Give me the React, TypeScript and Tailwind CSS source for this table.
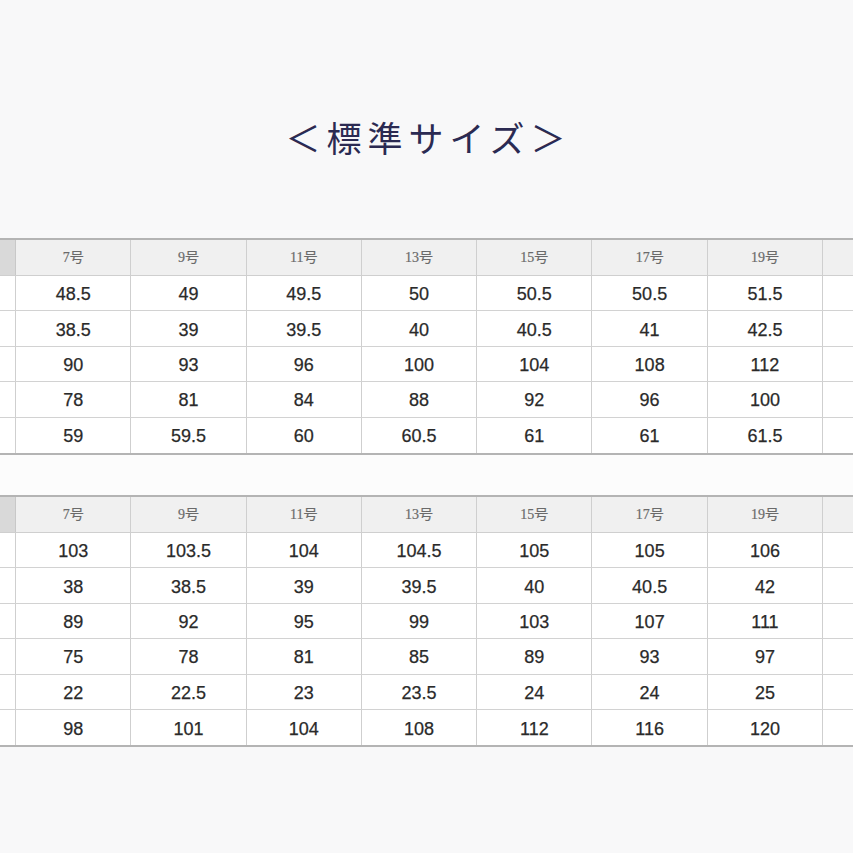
import React from "react";

const headers = ["7号", "9号", "11号", "13号", "15号", "17号", "19号"];

const table1 = [
  ["48.5", "49", "49.5", "50", "50.5", "50.5", "51.5"],
  ["38.5", "39", "39.5", "40", "40.5", "41", "42.5"],
  ["90", "93", "96", "100", "104", "108", "112"],
  ["78", "81", "84", "88", "92", "96", "100"],
  ["59", "59.5", "60", "60.5", "61", "61", "61.5"],
];

const table2 = [
  ["103", "103.5", "104", "104.5", "105", "105", "106"],
  ["38", "38.5", "39", "39.5", "40", "40.5", "42"],
  ["89", "92", "95", "99", "103", "107", "111"],
  ["75", "78", "81", "85", "89", "93", "97"],
  ["22", "22.5", "23", "23.5", "24", "24", "25"],
  ["98", "101", "104", "108", "112", "116", "120"],
];

function SizeTable({ rows }: { rows: string[][] }) {
  return (
    <div className="w-[900px] border-t-2 border-b-2 border-[#b4b4b4]">
      <div className="flex h-[36px] bg-[#f0f0f0] border-b border-[#cfcfcf]">
        <div className="w-[16px] shrink-0 bg-[#d9d9d9] border-r border-[#c8c8c8]" />
        {headers.map((h) => (
          <div
            key={h}
            className="w-[115.3px] shrink-0 border-r border-[#cfcfcf] flex items-center justify-center text-[14px] text-[#6a6a6a] [-webkit-text-stroke:0.2px_#6a6a6a]"
            style={{ fontFamily: '"Liberation Serif", "Noto Sans CJK JP", serif' }}
          >
            {h}
          </div>
        ))}
        <div className="flex-1" />
      </div>
      {rows.map((r, i) => (
        <div
          key={i}
          className={`flex h-[35.4px] bg-white ${i < rows.length - 1 ? "border-b border-[#d2d2d2]" : ""}`}
        >
          <div className="w-[16px] shrink-0 border-r border-[#cfcfcf]" />
          {r.map((v, j) => (
            <div
              key={j}
              className="w-[115.3px] shrink-0 border-r border-[#cfcfcf] flex items-center justify-center pt-[3px] text-[18px] text-[#2a2a2a] [-webkit-text-stroke:0.25px_#2a2a2a]"
              style={{ fontFamily: '"Liberation Sans", Arial, sans-serif' }}
            >
              {v}
            </div>
          ))}
          <div className="flex-1" />
        </div>
      ))}
    </div>
  );
}

export default function App() {
  return (
    <div className="w-[853px] h-[853px] overflow-hidden bg-[#f8f8f9]">
      <div className="h-[238px] pt-[117px] flex justify-center">
        <div
          className="text-[35px] leading-[40px] tracking-[6px] text-[#2b2a52] pl-[4px]"
          style={{ fontFamily: '"Noto Sans CJK JP", sans-serif' }}
        >
          ＜標準サイズ＞
        </div>
      </div>
      <SizeTable rows={table1} />
      <div className="h-[40px] bg-[#fcfcfc]" />
      <SizeTable rows={table2} />
    </div>
  );
}
